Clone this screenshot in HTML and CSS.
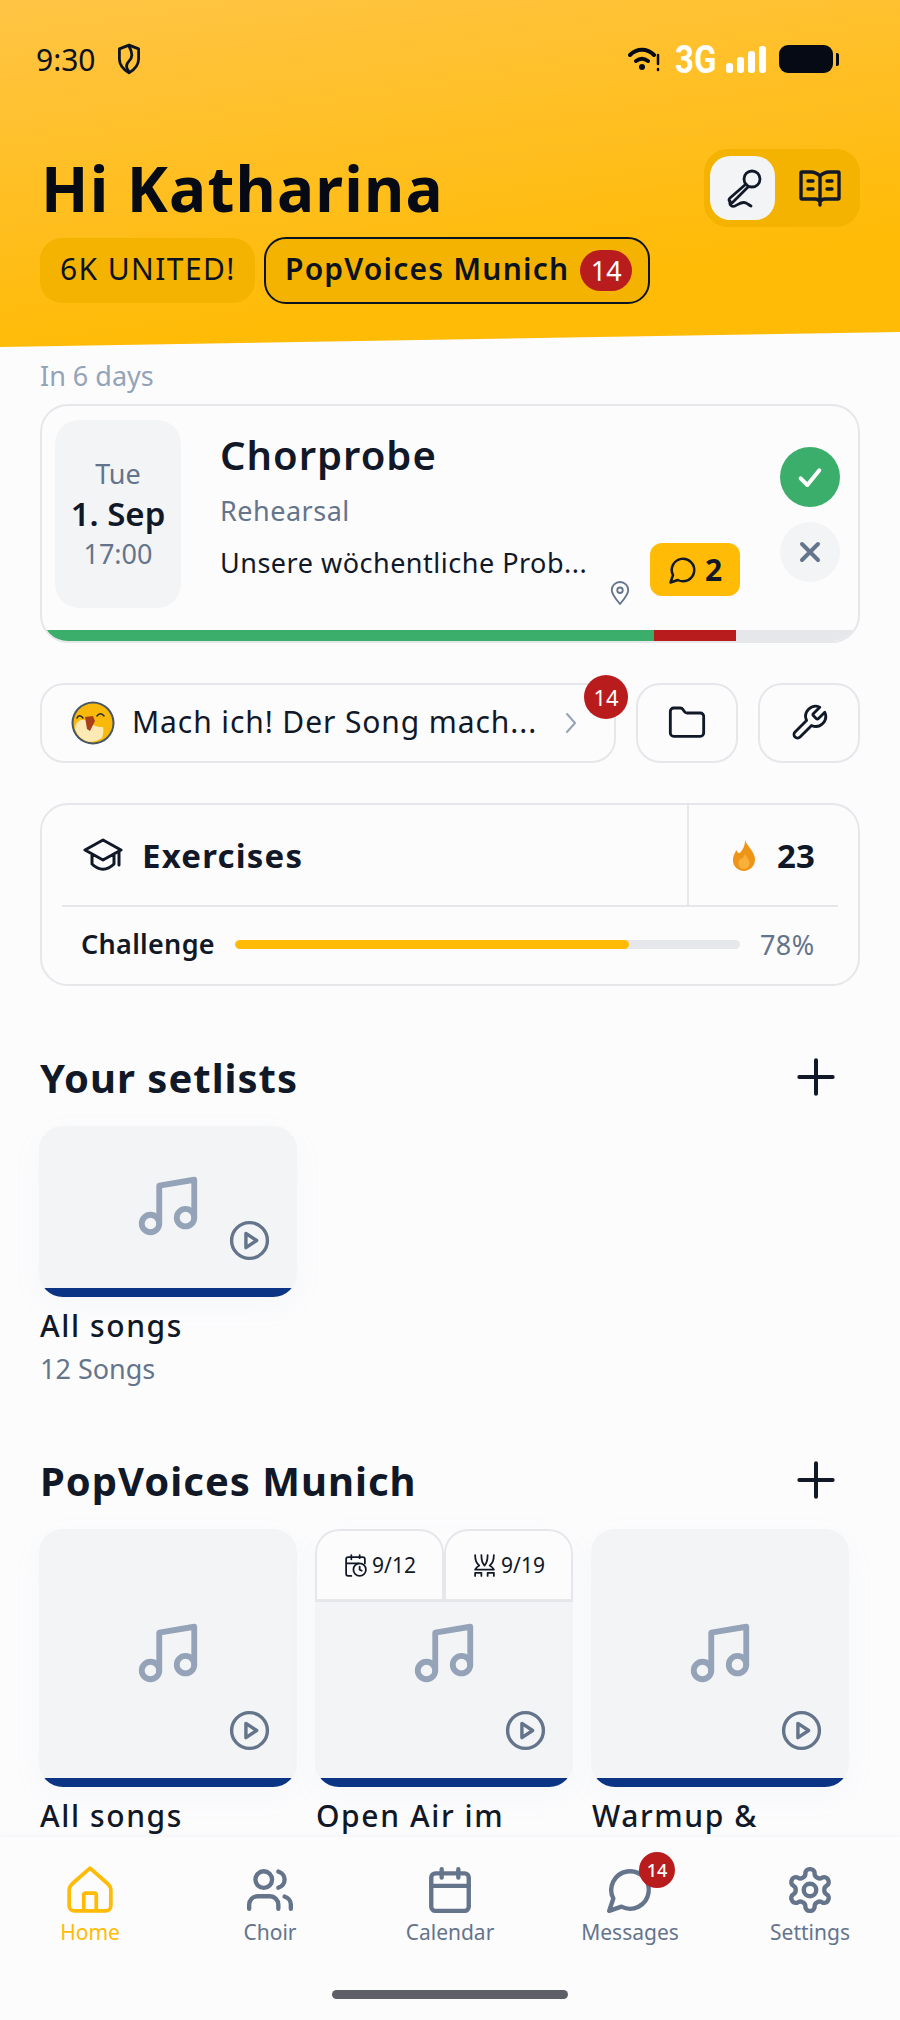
FILE: index.html
```html
<!DOCTYPE html>
<html lang="en">
<head>
<meta charset="utf-8">
<title>Home</title>
<link rel="stylesheet" href="styles.css">
</head>
<body>
<svg class="defs" width="0" height="0" aria-hidden="true">
  <symbol id="music" viewBox="0 0 24 24"><path d="M9 18V5l12-2v13"/><circle cx="6" cy="18" r="3"/><circle cx="18" cy="16" r="3"/></symbol>
  <symbol id="play" viewBox="0 0 24 24"><circle cx="12" cy="12" r="10"/><path d="M10 8l6 4-6 4z"/></symbol>
  <symbol id="plus" viewBox="0 0 24 24"><path d="M12 2v20M2 12h20"/></symbol>
</svg>
<div class="screen">
  <header class="header">
    <div class="status">
      <div class="status-left">
        <span class="clock">9:30</span>
        <svg class="shield" viewBox="0 0 24 30"><path d="M12 2l9 3.500V15c0 6-4 10-9 13-5-3-9-7-9-13V5.500z"/><path d="M12 3c3 5 4 10 0 14s-2 7 0 10"/></svg>
      </div>
      <div class="status-right">
        <svg class="wifi" viewBox="0 0 32 28"><path class="wifi-a" d="M2 10c7-7 17-7 24 0"/><path class="wifi-a" d="M8 16c4-3 8-3 12 0"/><circle cx="14" cy="22" r="3"/><path class="wifi-b" d="M30 10v9M30 24v1"/></svg>
        <span class="net">3G</span>
        <div class="bars"><i class="b1"></i><i class="b2"></i><i class="b3"></i><i class="b4"></i></div>
        <div class="battery"><div class="cell"></div><div class="nub"></div></div>
      </div>
    </div>
    <div class="hello">
      <h1>Hi Katharina</h1>
      <div class="toggle">
        <div class="tg tg-on"><svg class="ic-mic" viewBox="0 0 44 44"><circle cx="31" cy="13" r="8"/><path d="M25 18L9 32c-2 2-.5 5 2.500 4.500L27 21M9 35c-1 4 2 6 5 5 4-2 7-5 11-3 2 1 3 2 5 3"/></svg></div>
        <div class="tg"><svg class="ic-book" viewBox="0 0 42 38"><path d="M21 7c-3-3-6-4-9-4H3a1 1 0 0 0-1 1v25a1 1 0 0 0 1 1h13c2 0 4 1 5 3 1-2 3-3 5-3h13a1 1 0 0 0 1-1V4a1 1 0 0 0-1-1h-9c-3 0-6 1-9 4zM21 7v26M21 33v3M9 12h5M9 20h5M28 12h5M28 20h5"/></svg></div>
      </div>
    </div>
    <div class="choirs">
      <div class="pill">6K UNITED!</div>
      <div class="pill pill-on">PopVoices Munich <span class="count">14</span></div>
    </div>
  </header>

  <main class="main">
    <div class="when">In 6 days</div>
    <article class="event">
      <div class="event-body">
        <div class="date">
          <span class="d-day">Tue</span>
          <span class="d-num">1. Sep</span>
          <span class="d-time">17:00</span>
        </div>
        <div class="info">
          <h2>Chorprobe</h2>
          <div class="kind">Rehearsal</div>
          <div class="desc">Unsere wöchentliche Prob...</div>
          <svg class="pin" viewBox="0 0 24 28"><path d="M12 26C6 19 3 15 3 11a9 9 0 0 1 18 0c0 4-3 8-9 15z"/><circle cx="12" cy="11" r="3"/></svg>
          <div class="comments"><svg viewBox="0 0 24 24"><path d="M7.900 20A9 9 0 1 0 4 16.100L2 22Z"/></svg><b>2</b></div>
        </div>
        <div class="rsvp">
          <div class="rs rs-yes"><svg viewBox="0 0 24 24"><path d="M5 13l5 5L19 7"/></svg></div>
          <div class="rs rs-no"><svg viewBox="0 0 24 24"><path d="M6 6l12 12M18 6L6 18"/></svg></div>
        </div>
      </div>
      <div class="attend"><i class="a-yes"></i><i class="a-no"></i></div>
    </article>

    <div class="tools">
      <div class="song">
        <svg class="avatar" viewBox="0 0 44 44">
          <circle cx="22" cy="22" r="21.500" fill="#475569"/>
          <circle cx="22" cy="22" r="19.500" fill="#f9b90b"/>
          <path d="M4 27c1-6 5-9 10-8l7 4c4 3 8 3 11 3 1 4 0 8-1 11-6 4-13 5-18 2-4-2-8-7-9-12z" fill="#fde9b4"/>
          <path d="M14 16l8-1 2 5-5 10-3-2z" fill="#a8401c"/>
          <path d="M6 17c1-3 4-3 6 0M26 15c2-3 5-3 7 0" fill="none" stroke="#1f2937" stroke-width="1.500"/>
        </svg>
        <span class="song-title">Mach ich! Der Song mach...</span>
        <svg class="chev" viewBox="0 0 12 24"><path d="M2 3l8 9-8 9"/></svg>
        <span class="song-badge">14</span>
      </div>
      <div class="tool"><svg viewBox="0 0 24 24"><path d="M4 20h16a2 2 0 0 0 2-2V8a2 2 0 0 0-2-2h-7.930a2 2 0 0 1-1.660-.900l-.820-1.200A2 2 0 0 0 7.930 3H4a2 2 0 0 0-2 2v13c0 1.100.900 2 2 2Z"/></svg></div>
      <div class="tool"><svg viewBox="0 0 24 24"><path d="M14.700 6.300a1 1 0 0 0 0 1.400l1.600 1.600a1 1 0 0 0 1.400 0l3.770-3.770a6 6 0 0 1-7.940 7.940l-6.910 6.910a2.120 2.120 0 0 1-3-3l6.910-6.910a6 6 0 0 1 7.940-7.940l-3.760 3.760z"/></svg></div>
    </div>

    <section class="exercises">
      <div class="ex-top">
        <div class="ex-title">
          <svg class="hat" viewBox="0 0 40 34"><path d="M20 2L2 12l18 10 18-10zM9 17v9c7 7 15 7 22 0v-9M36 13v14"/></svg>
          <span>Exercises</span>
        </div>
        <div class="ex-streak">
          <svg class="flame" viewBox="2 1 20 28"><path d="M13 1c1 5 8 9 9 17 0 7-5 11-10 11S2 25 2 19c0-4 2-6 3-9 1 2 2 3 3 3 3-3 5-7 5-12z" fill="#ee9417"/><path d="M13 12c0 4 4 6 4 10 0 3-2 5-5 5s-5-2-5-5c0-2 1-3 2-4 2 0 4-3 4-6z" fill="#f7b13a"/></svg>
          <b>23</b>
        </div>
      </div>
      <div class="ex-bottom">
        <span class="ch-label">Challenge</span>
        <div class="track"><div class="fill" style="width:78%"></div></div>
        <span class="ch-pct">78%</span>
      </div>
    </section>

    <div class="sec-head sec-first"><h3>Your setlists</h3><svg class="plus"><use href="#plus"/></svg></div>
    <div class="lists">
      <div class="list">
        <div class="tile">
          <svg class="music"><use href="#music"/></svg>
          <svg class="playb"><use href="#play"/></svg>
        </div>
        <div class="list-name">All songs</div>
        <div class="list-sub">12 Songs</div>
      </div>
    </div>

    <div class="sec-head sec-second"><h3>PopVoices Munich</h3><svg class="plus"><use href="#plus"/></svg></div>
    <div class="lists">
      <div class="list">
        <div class="tile tile-big">
          <svg class="music"><use href="#music"/></svg>
          <svg class="playb"><use href="#play"/></svg>
        </div>
        <div class="list-name">All songs</div>
      </div>
      <div class="list">
        <div class="tile tile-big tile-tabs">
          <div class="tabs">
            <div class="tab"><svg viewBox="0 0 24 24"><path d="M8 2v4M16 2v3M3 10h12M8 22H5a2 2 0 0 1-2-2V6a2 2 0 0 1 2-2h14a2 2 0 0 1 2 2v4"/><circle cx="16" cy="16" r="6"/><path d="M16 13v3l2 1"/></svg><span>9/12</span></div>
            <div class="tab"><svg viewBox="0 0 24 24"><path d="M3 2c0 5 1 8 4 10-2 1-3 2-4 4h18c-1-2-2-3-4-4 3-2 4-5 4-10M9 2c0 4 1 8 3 10 2-2 3-6 3-10M7 16h10M3 22v-3h6v3M15 22v-3h6v3"/></svg><span>9/19</span></div>
          </div>
          <svg class="music"><use href="#music"/></svg>
          <svg class="playb"><use href="#play"/></svg>
        </div>
        <div class="list-name">Open Air im</div>
      </div>
      <div class="list">
        <div class="tile tile-big">
          <svg class="music"><use href="#music"/></svg>
          <svg class="playb"><use href="#play"/></svg>
        </div>
        <div class="list-name">Warmup &amp;</div>
      </div>
    </div>
  </main>

  <nav class="nav">
    <div class="nav-items">
      <div class="nav-item nav-on"><svg viewBox="0 0 48 48"><path d="M24 3L7 18q-3 3-3 6v15a5 5 0 0 0 5 5h30a5 5 0 0 0 5-5V24q0-3-3-6zM18 44V29a2 2 0 0 1 2-2h8a2 2 0 0 1 2 2v15"/></svg><span>Home</span></div>
      <div class="nav-item"><svg viewBox="0 0 24 24"><path d="M16 21v-2a4 4 0 0 0-4-4H6a4 4 0 0 0-4 4v2"/><circle cx="9" cy="7" r="4"/><path d="M22 21v-2a4 4 0 0 0-3-3.870M16 3.130a4 4 0 0 1 0 7.750"/></svg><span>Choir</span></div>
      <div class="nav-item"><svg viewBox="0 0 24 24"><path d="M8 2v4M16 2v4M3 10h18"/><rect x="3" y="4" width="18" height="18" rx="2"/></svg><span>Calendar</span></div>
      <div class="nav-item"><svg viewBox="0 0 24 24"><path d="M7.900 20A9 9 0 1 0 4 16.100L2 22Z"/></svg><span>Messages</span><b class="nav-badge">14</b></div>
      <div class="nav-item"><svg viewBox="0 0 24 24"><path d="M12.220 2h-.440a2 2 0 0 0-2 2v.180a2 2 0 0 1-1 1.730l-.430.250a2 2 0 0 1-2 0l-.150-.080a2 2 0 0 0-2.730.730l-.220.380a2 2 0 0 0 .730 2.730l.150.100a2 2 0 0 1 1 1.720v.510a2 2 0 0 1-1 1.740l-.150.090a2 2 0 0 0-.730 2.730l.220.380a2 2 0 0 0 2.730.730l.150-.080a2 2 0 0 1 2 0l.430.250a2 2 0 0 1 1 1.730V20a2 2 0 0 0 2 2h.440a2 2 0 0 0 2-2v-.180a2 2 0 0 1 1-1.730l.430-.250a2 2 0 0 1 2 0l.150.080a2 2 0 0 0 2.730-.730l.220-.390a2 2 0 0 0-.730-2.730l-.150-.080a2 2 0 0 1-1-1.740v-.500a2 2 0 0 1 1-1.740l.150-.090a2 2 0 0 0 .730-2.730l-.220-.380a2 2 0 0 0-2.730-.730l-.150.080a2 2 0 0 1-2 0l-.430-.250a2 2 0 0 1-1-1.730V4a2 2 0 0 0-2-2z"/><circle cx="12" cy="12" r="3"/></svg><span>Settings</span></div>
    </div>
    <div class="home-bar"></div>
  </nav>
</div>
</body>
</html>
```
FILE: styles.css
```css
* { box-sizing: border-box; }
html, body { margin: 0; padding: 0; }
body { background: #fcfcfd; font-family: "Noto Sans", "Lato", sans-serif; color: #111827; }
.defs { position: absolute; }
svg { fill: none; stroke-linecap: round; stroke-linejoin: round; display: block; }
h1, h2, h3 { margin: 0; }
.screen { position: relative; width: 900px; height: 2020px; overflow: hidden; }

/* header */
.header { height: 347px; padding: 42px 40px 0; background: linear-gradient(172deg, #ffc445 0%, #ffbb05 78%); clip-path: polygon(0 0, 100% 0, 100% 332px, 0 100%); }
.status { display: flex; justify-content: space-between; align-items: center; height: 34px; }
.status-left { display: flex; align-items: center; gap: 19px; margin-left: -4px; }
.clock { font-size: 30px; color: #0b1220; }
.shield { width: 28px; height: 32px; stroke: #0b1220; stroke-width: 2.600; }
.status-right { display: flex; align-items: center; margin-right: 21px; }
.wifi { width: 32px; height: 28px; margin-right: 15px; fill: #050a14; }
.wifi-a { stroke: #050a14; stroke-width: 4; fill: none; }
.wifi-b { stroke: #050a14; stroke-width: 2.500; }
.net { font-family: "Roboto", sans-serif; font-weight: 700; font-size: 33px; color: #fff; width: 51px; transform: scaleY(1.180); }
.bars { display: flex; align-items: flex-end; gap: 4px; height: 27px; margin-right: 13px; }
.bars i { width: 7px; background: #fff; border-radius: 3px; }
.b1 { height: 10px; } .b2 { height: 16px; } .b3 { height: 22px; } .b4 { height: 27px; }
.battery { display: flex; align-items: center; gap: 3px; }
.cell { width: 54px; height: 28px; background: #050a14; border-radius: 9px; }
.nub { width: 3px; height: 13px; background: #050a14; border-radius: 0 2px 2px 0; }

.hello { display: flex; justify-content: space-between; align-items: center; margin-top: 73px; height: 78px; padding-left: 1px; }
h1 { font-size: 62px; font-weight: 700; line-height: 78px; color: #050a14; letter-spacing: 1.200px; }
.toggle { display: flex; gap: 8px; width: 156px; height: 78px; padding: 7px 6px; background: #f3b300; border-radius: 24px; }
.tg { width: 65px; height: 64px; border-radius: 20px; display: flex; align-items: center; justify-content: center; }
.tg + .tg { width: 71px; padding-left: 3px; }
.tg-on { background: #f3f4f6; }
.ic-mic { width: 44px; height: 44px; stroke: #111827; stroke-width: 2.800; }
.ic-book { width: 42px; height: 38px; stroke: #111827; stroke-width: 3.400; }

.choirs { display: flex; gap: 9px; margin-top: 10px; align-items: center; }
.pill { height: 65px; padding: 0 0 5px 20px; width: 215px; display: flex; align-items: center; background: #f3b300; border-radius: 22px; font-size: 30px; color: #0b1220; letter-spacing: 1.400px; }
.pill-on { width: 386px; height: 67px; border: 2px solid #0b1220; font-weight: 600; gap: 11px; padding: 0 0 4px 19px; letter-spacing: 1.200px; }
.count { width: 52px; height: 41px; margin-top: 4px; border-radius: 21px; background: #b91c1c; color: #fff; font-size: 27px; font-weight: 400; letter-spacing: 0; display: flex; align-items: center; justify-content: center; }

/* main */
.main { padding: 0 40px; }
.when { font-size: 27px; line-height: 34px; color: #94a3b8; margin-top: 12px; }
.event { margin-top: 11px; height: 239px; border: 2px solid #e5e7eb; border-radius: 28px; overflow: hidden; display: flex; flex-direction: column; background: #fcfcfd; }
.event-body { flex: 1; display: flex; padding: 14px 0 0 13px; }
.date { width: 126px; height: 188px; background: #f3f4f6; border-radius: 24px; display: flex; flex-direction: column; align-items: center; justify-content: center; }
.d-day { font-size: 27px; line-height: 36px; color: #64748b; }
.d-num { font-size: 33px; line-height: 44px; font-weight: 600; color: #111827; }
.d-time { font-size: 27px; line-height: 36px; color: #64748b; }
.info { position: relative; width: 544px; padding: 10px 0 0 39px; }
h2 { font-size: 40px; line-height: 50px; font-weight: 600; color: #111827; letter-spacing: 1px; }
.kind { font-size: 27px; line-height: 34px; color: #64748b; margin-top: 14px; letter-spacing: .5px; }
.desc { font-size: 27px; line-height: 34px; color: #111827; margin-top: 18px; white-space: nowrap; letter-spacing: .5px; }
.pin { position: absolute; left: 428px; top: 160px; width: 22px; height: 26px; stroke: #64748b; stroke-width: 2; }
.comments { position: absolute; left: 469px; top: 123px; width: 90px; height: 53px; background: #ffbb05; border-radius: 12px; display: flex; align-items: center; justify-content: center; gap: 7px; font-size: 30px; }
.comments svg { width: 30px; height: 30px; stroke: #111827; stroke-width: 2; }
.comments b { font-weight: 700; }
.rsvp { margin-left: 55px; padding-top: 27px; display: flex; flex-direction: column; gap: 15px; }
.rs { width: 60px; height: 60px; border-radius: 50%; display: flex; align-items: center; justify-content: center; }
.rs svg { width: 32px; height: 32px; stroke-width: 3; }
.rs-yes { background: #3cae6b; } .rs-yes svg { stroke: #fff; }
.rs-no { background: #f3f4f6; } .rs-no svg { stroke: #64748b; }
.attend { display: flex; height: 11px; margin: 0 1px; background: #e5e7eb; }
.a-yes { width: 611px; background: #3cae6b; }
.a-no { width: 82px; background: #b91c1c; }

.tools { display: flex; gap: 20px; margin-top: 40px; }
.song { position: relative; width: 576px; height: 80px; border: 2px solid #e5e7eb; border-radius: 24px; display: flex; align-items: center; padding-left: 29px; }
.avatar { width: 44px; height: 44px; flex: none; }
.song-title { flex: 1; font-size: 30px; line-height: 40px; margin-left: 17px; color: #111827; white-space: nowrap; letter-spacing: .9px; padding-bottom: 2px; }
.chev { width: 12px; height: 24px; margin-right: 37px; stroke: #94a3b8; stroke-width: 2; }
.song-badge { position: absolute; left: 542px; top: -10px; width: 44px; height: 44px; border-radius: 50%; background: #b91c1c; color: #fff; font-size: 22px; display: flex; align-items: center; justify-content: center; }
.tool { width: 102px; height: 80px; border: 2px solid #e5e7eb; border-radius: 24px; display: flex; align-items: center; justify-content: center; }
.tool svg { width: 40px; height: 40px; stroke: #111827; stroke-width: 1.700; }

.exercises { margin-top: 40px; height: 183px; border: 2px solid #e5e7eb; border-radius: 28px; padding: 0 20px; }
.ex-top { display: flex; height: 102px; border-bottom: 2px solid #e5e7eb; }
.ex-title { flex: 1; display: flex; align-items: center; gap: 19px; padding-left: 21px; font-size: 33px; font-weight: 700; border-right: 2px solid #e5e7eb; letter-spacing: 1.200px; }
.hat { width: 40px; height: 34px; stroke: #111827; stroke-width: 3; }
.ex-streak { width: 149px; display: flex; align-items: center; padding-left: 43px; gap: 21px; font-size: 33px; }
.ex-streak b { font-weight: 700; }
.flame { width: 24px; height: 31px; }
.ex-bottom { display: flex; align-items: center; height: 75px; padding-left: 19px; padding-right: 20px; }
.ch-label { font-size: 27px; font-weight: 600; width: 154px; letter-spacing: .3px; padding-bottom: 2px; }
.track { width: 505px; height: 9px; background: #e5e7eb; border-radius: 5px; overflow: hidden; }
.fill { height: 100%; background: #ffbb05; border-radius: 5px; }
.ch-pct { font-size: 27px; color: #64748b; margin-left: 20px; letter-spacing: .4px; }

.sec-head { display: flex; justify-content: space-between; align-items: center; height: 50px; padding-right: 24px; }
.sec-first { margin-top: 66px; }
.sec-second { margin-top: 69px; }
h3 { font-size: 40px; font-weight: 700; color: #111827; letter-spacing: 1px; }
.plus { width: 40px; height: 40px; stroke: #111827; stroke-width: 2.400; }

.lists { display: flex; gap: 18px; margin: 24px 0 0 -1px; }
.list { width: 258px; flex: none; }
.tile { position: relative; height: 171px; background: #f3f4f6; border-radius: 24px; overflow: hidden; box-shadow: 0 10px 30px rgba(148,163,184,.06); }
.tile::after { content: ""; position: absolute; left: 4px; right: 4px; bottom: 0; height: 9px; background: #0c3484; border-radius: 0 0 14px 14px; }
.tile-big { height: 258px; }
.music { position: absolute; left: 94px; top: 45px; width: 70px; height: 70px; stroke: #94a3b8; stroke-width: 2; }
.tile-big .music { top: 89px; }
.playb { position: absolute; left: 189px; top: 93px; width: 43px; height: 43px; stroke: #64748b; stroke-width: 1.900; }
.tile-big .playb { top: 180px; }
.tabs { display: flex; height: 73px; background: #fcfcfd; border-bottom: 3px solid #e5e7eb; }
.tab { flex: 1; border: 2px solid #e5e7eb; border-bottom: 0; border-radius: 24px 24px 0 0; display: flex; align-items: center; justify-content: center; gap: 4px; font-size: 21px; color: #111827; }
.tab svg { width: 25px; height: 25px; stroke: #111827; stroke-width: 1.700; }
.list-name { font-size: 30px; font-weight: 500; line-height: 38px; margin: 10px 0 0 1px; color: #111827; white-space: nowrap; letter-spacing: 1.600px; }
.list-sub { font-size: 27px; line-height: 34px; margin: 7px 0 0 1px; color: #64748b; }

/* bottom nav */
.nav { position: absolute; left: 0; right: 0; bottom: 0; height: 183px; background: #fcfcfd; box-shadow: 0 -2px 4px rgba(148,163,184,.08); }
.nav-items { display: grid; grid-template-columns: repeat(5, 1fr); padding-top: 28px; }
.nav-item { position: relative; display: flex; flex-direction: column; align-items: center; color: #64748b; font-size: 21px; }
.nav-item svg { width: 50px; height: 50px; stroke: #64748b; stroke-width: 2.100; }
.nav-item span { margin-top: 3px; line-height: 28px; }
.nav-on, .nav-on span { color: #ffbb05; }
.nav-on svg { stroke: #ffbb05; stroke-width: 3.600; }
.nav-badge { position: absolute; left: 99px; top: -13px; width: 36px; height: 36px; border-radius: 50%; background: #b91c1c; color: #fff; font-size: 18px; font-weight: 500; display: flex; align-items: center; justify-content: center; }
.home-bar { position: absolute; left: 332px; top: 153px; width: 236px; height: 9px; border-radius: 5px; background: #5d5f66; }
```
